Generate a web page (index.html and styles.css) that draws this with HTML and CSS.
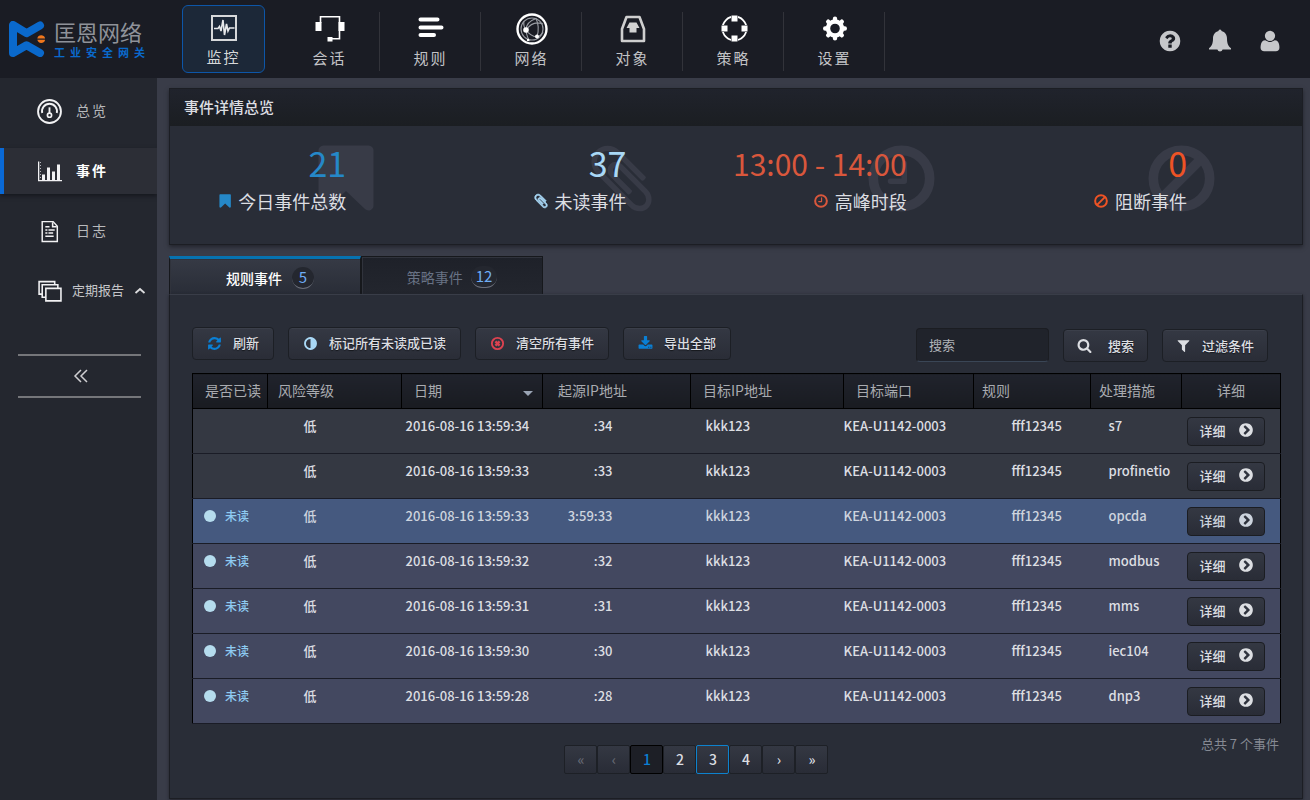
FILE: index.html
```html
<!DOCTYPE html>
<html lang="zh-CN">
<head>
<meta charset="utf-8">
<title>匡恩网络 工业安全网关</title>
<link rel="stylesheet" href="styles.css">
</head>
<body>
<svg class="defs" aria-hidden="true">
  <symbol id="i-refresh" viewBox="0 0 1792 1792"><path d="M1639 1056q0 5-1 7-64 268-268 434.500t-478 166.500q-146 0-282.500-55t-243.500-157l-129 129q-19 19-45 19t-45-19-19-45v-448q0-26 19-45t45-19h448q26 0 45 19t19 45-19 45l-137 137q71 66 161 102t187 36q134 0 250-65t186-179q11-17 53-117 8-23 30-23h192q13 0 22.500 9.500t9.500 22.500zm25-800v448q0 26-19 45t-45 19h-448q-26 0-45-19t-19-45 19-45l138-138q-148-137-349-137-134 0-250 65t-186 179q-11 17-53 117-8 23-30 23h-199q-13 0-22.500-9.500t-9.500-22.500v-7q65-268 270-434.500t480-166.500q146 0 284 55.500t245 156.500l130-129q19-19 45-19t45 19 19 45z"/></symbol>
  <symbol id="i-adjust" viewBox="0 0 1792 1792"><path d="M896 1440v-1088q-148 0-273 73t-198 198-73 273 73 273 198 198 273 73zm768-544q0 209-103 385.500t-279.500 279.500-385.500 103-385.500-103-279.500-279.500-103-385.500 103-385.500 279.500-279.500 385.500-103 385.500 103 279.500 279.500 103 385.500z"/></symbol>
  <symbol id="i-clear" viewBox="0 0 16 16"><circle cx="8" cy="8" r="6" fill="none" stroke="currentColor" stroke-width="2"/><path d="M5.800 5.800l4.400 4.400M10.200 5.800l-4.400 4.400" stroke="currentColor" stroke-width="2.600"/></symbol>
  <symbol id="i-download" viewBox="0 0 1792 1792"><path d="M1344 1344q0-26-19-45t-45-19-45 19-19 45 19 45 45 19 45-19 19-45zm256 0q0-26-19-45t-45-19-45 19-19 45 19 45 45 19 45-19 19-45zm128-224v320q0 40-28 68t-68 28h-1472q-40 0-68-28t-28-68v-320q0-40 28-68t68-28h465l135 136q58 56 136 56t136-56l136-136h464q40 0 68 28t28 68zm-325-569q17 41-14 70l-448 448q-18 19-45 19t-45-19l-448-448q-31-29-14-70 17-39 59-39h256v-448q0-26 19-45t45-19h256q26 0 45 19t19 45v448h256q42 0 59 39z"/></symbol>
  <symbol id="i-search" viewBox="0 0 1792 1792"><path d="M1216 832q0-185-131.500-316.500t-316.500-131.500-316.500 131.500-131.500 316.500 131.500 316.500 316.500 131.500 316.500-131.500 131.500-316.500zm512 832q0 52-38 90t-90 38q-54 0-90-38l-343-342q-179 124-399 124-143 0-273.500-55.500t-225-150-150-225-55.500-273.500 55.500-273.500 150-225 225-150 273.500-55.500 273.500 55.500 225 150 150 225 55.500 273.500q0 220-124 399l343 343q37 37 37 90z"/></symbol>
  <symbol id="i-filter" viewBox="0 0 1792 1792"><path d="M1595 295q17 41-14 70l-493 493v742q0 42-39 59-13 5-25 5-27 0-45-19l-256-256q-19-19-19-45v-486l-493-493q-31-29-14-70 17-39 59-39h1280q42 0 59 39z"/></symbol>
  <symbol id="i-bookmark" viewBox="-128 0 1792 1792"><path d="M1420 128q23 0 44 9 33 13 52.500 41t19.500 62v1289q0 34-19.500 62t-52.500 41q-19 8-44 8-48 0-83-32l-441-424-441 424q-36 33-83 33-23 0-44-9-33-13-52.500-41t-19.500-62v-1289q0-34 19.500-62t52.500-41q21-9 44-9h1048z"/></symbol>
  <symbol id="i-clip" viewBox="0 0 1792 1792"><path d="M1596 1385q0 117-79 196t-196 79q-135 0-235-100l-777-776q-113-115-113-271 0-159 110-270t269-111q158 0 273 113l605 606q10 10 10 22 0 16-30.500 46.500t-46.500 30.500q-13 0-23-10l-606-607q-79-77-181-77-106 0-179 75t-73 181q0 105 76 181l776 777q63 63 145 63 64 0 106-42t42-106q0-82-63-145l-581-581q-26-24-60-24-29 0-48 19t-19 48q0 32 25 59l410 410q10 10 10 22 0 16-31 47t-47 31q-12 0-22-10l-410-410q-63-61-63-149 0-82 57-139t139-57q88 0 149 63l581 581q100 98 100 235z"/></symbol>
  <symbol id="i-clock" viewBox="0 0 1792 1792"><circle cx="896" cy="896" r="656" fill="none" stroke="currentColor" stroke-width="224"/><path d="M960 544v416h-320" fill="none" stroke="currentColor" stroke-width="128" stroke-linejoin="round" stroke-linecap="round"/></symbol>
  <symbol id="i-ban" viewBox="0 0 1792 1792"><circle cx="896" cy="896" r="656" fill="none" stroke="currentColor" stroke-width="224"/><path d="M432 1360l928-928" stroke="currentColor" stroke-width="224"/></symbol>
  <symbol id="i-go" viewBox="0 0 1792 1792"><path d="M845 1395l454-454q19-19 19-45t-19-45l-454-454q-19-19-45-19t-45 19l-102 102q-19 19-19 45t19 45l307 307-307 307q-19 19-19 45t19 45l102 102q19 19 45 19t45-19zm819-499q0 209-103 385.500t-279.500 279.500-385.500 103-385.500-103-279.500-279.500-103-385.500 103-385.500 279.500-279.500 385.500-103 385.500 103 279.500 279.500 103 385.500z"/></symbol>
</svg>

<header class="topbar">
  <a class="logo" href="#">
    <svg class="logo-mark" viewBox="0 0 36 36" aria-hidden="true">
      <path d="M31 4.500L17.500 12.200L4 4V32L17.500 24.300L31 32" fill="none" stroke="#0a69cc" stroke-width="8" stroke-linejoin="round" stroke-linecap="round"/>
      <path d="M28.300 17.400a4 4 0 0 1 7.800 0zM28.300 18.800a4 4 0 0 0 7.800 0z" fill="#f0771c"/>
    </svg>
    <span class="logo-text"><span class="logo-name">匡恩网络</span><span class="logo-sub">工业安全网关</span></span>
  </a>
  <nav class="nav">
    <a class="nav-item active" href="#">
      <svg viewBox="0 0 32 32"><rect x="4" y="4" width="24" height="24" fill="none" stroke="#d6d8da" stroke-width="2"/><path d="M6 16.500h4l1.500-2 1.500 4.500 2-11 1.500 15 2-11 1.500 7 1.500-3h5" fill="none" stroke="#e6e8ea" stroke-width="1.600"/></svg>
      <span>监控</span></a>
    <a class="nav-item" href="#">
      <svg viewBox="0 0 32 32"><path d="M6.500 10V3.800h19v22H17" fill="none" stroke="#fff" stroke-width="1.600"/><path d="M1.500 9h6v9h-6zM24.500 9h6v9h-6zM13.500 24h5v4.500h-5z" fill="#fff"/></svg>
      <span>会话</span></a>
    <a class="nav-item" href="#">
      <svg viewBox="0 0 32 32"><path d="M5.500 6.500h17M5.500 14.500h21M5.500 22h13.500" stroke="#fff" stroke-width="4" stroke-linecap="round"/></svg>
      <span>规则</span></a>
    <a class="nav-item" href="#">
      <svg viewBox="0 0 32 32"><circle cx="16" cy="16" r="14.500" fill="none" stroke="#fff" stroke-width="2.400"/><g fill="none" stroke="#9a9da4" stroke-width="1.100"><circle cx="16" cy="16" r="11"/><path d="M10 17Q10 9 20 5.500M10 17Q17 7 27 11M10 17Q14 23 21 24M21 24Q24 14 20 5.500M10 17q1 8 4 11M8 8q-1 5 2 9M21 24q4-1 6-5"/></g><circle cx="10" cy="17" r="2.800" fill="#fff"/><circle cx="21" cy="23.500" r="2" fill="#fff"/><circle cx="12" cy="27" r="1.200" fill="#fff"/></svg>
      <span>网络</span></a>
    <a class="nav-item" href="#">
      <svg viewBox="0 0 32 32"><path d="M9.500 4h13l4.500 12v12H5V16z" fill="none" stroke="#cfcfcf" stroke-width="2.600" stroke-linejoin="round"/><path d="M12.500 9.500h7l3 5.500h-3v4.500h-7V15h-3z" fill="#d2d2d2"/></svg>
      <span>对象</span></a>
    <a class="nav-item" href="#">
      <svg viewBox="0 0 32 32"><circle cx="16.500" cy="15.500" r="12" fill="none" stroke="#fff" stroke-width="1.800"/><path d="M13 2h7v7h-7zM13 22h7v7h-7zM3 12h7v7H3zM23 12h7v7h-7z" fill="#1a1c24"/><path d="M13.500 2.500h6v6h-6zM13.500 22.500h6v6h-6zM3.500 12.500h6v6h-6zM23.500 12.500h6v6h-6z" fill="#fff"/></svg>
      <span>策略</span></a>
    <a class="nav-item" href="#">
      <svg viewBox="0 0 32 32"><circle cx="16" cy="15.500" r="7" fill="none" stroke="#fff" stroke-width="4.400"/><g stroke="#fff" stroke-width="4.400" stroke-linecap="round"><path d="M16 5.700V8M16 23v2.300M6.200 15.500H8M24 15.500h1.800M9.200 8.700l1.300 1.300M21.500 21l1.300 1.300M22.800 8.700L21.500 10M10.500 21l-1.300 1.300"/></g></svg>
      <span>设置</span></a>
  </nav>
  <div class="tools">
    <button type="button" aria-label="帮助"><svg viewBox="0 0 1792 1792"><path d="M1024 1376v-192q0-14-9-23t-23-9h-192q-14 0-23 9t-9 23v192q0 14 9 23t23 9h192q14 0 23-9t9-23zm256-672q0-88-55.500-163t-138.500-116-170-41q-243 0-371 213-15 24 8 42l132 100q7 6 19 6 16 0 25-12 53-68 86-92 34-24 86-24 48 0 85.500 26t37.500 59q0 38-20 61t-68 45q-63 28-115.500 86.500t-52.500 125.500v36q0 14 9 23t23 9h192q14 0 23-9t9-23q0-19 21.500-49.500t54.500-49.500q32-18 49-28.500t46-35 44.500-48 28-60.500 12.500-81zm384 192q0 209-103 385.500t-279.500 279.500-385.500 103-385.500-103-279.500-279.500-103-385.500 103-385.500 279.500-279.500 385.500-103 385.500 103 279.500 279.500 103 385.500z"/></svg></button>
    <button type="button" aria-label="通知"><svg viewBox="0 0 24 24"><path d="M12 .500a1.500 1.500 0 0 1 1.500 1.600C17 3 19 6 19 9.500c0 5.500 1.500 8 4 9.800V20.500h-8.400a2.700 2.700 0 0 1-5.200 0H1v-1.200c2.500-1.800 4-4.300 4-9.800C5 6 7 3 10.500 2.100A1.500 1.500 0 0 1 12 .500z"/></svg></button>
    <button type="button" aria-label="用户"><svg viewBox="0 0 1792 1792"><path d="M1600 1405q0 120-73 189.500t-194 69.500h-874q-121 0-194-69.500t-73-189.500q0-53 3.500-103.500t14-109 26.500-108.500 43-97.500 62-81 85.500-53.500 111.500-20q9 0 42 21.500t74.500 48 108 48 133.500 21.500 133.500-21.500 108-48 74.500-48 42-21.500q61 0 111.500 20t85.500 53.500 62 81 43 97.500 26.500 108.500 14 109 3.500 103.500zm-320-893q0 159-112.500 271.500t-271.500 112.500-271.500-112.500-112.500-271.500 112.500-271.500 271.500-112.500 271.500 112.500 112.500 271.500z"/></svg></button>
  </div>
</header>

<div class="layout">
  <aside class="sidebar">
    <nav class="menu">
      <a class="menu-item" href="#"><svg viewBox="0 0 24 24"><g fill="none" stroke="#f2f2f4"><circle cx="12" cy="12" r="11" stroke-width="1.800"/><path d="M5 13.500A7.200 7.200 0 1 1 19 13.500" stroke-width="1.800"/><circle cx="12" cy="15.500" r="2" stroke-width="1.600"/><path d="M12 8v6" stroke-width="1.800"/></g></svg><span>总览</span></a>
      <a class="menu-item active" href="#"><svg viewBox="0 0 25 25"><path d="M1 2.500h1.300V21H25v1.300H1zM5 15.500h3V21H5zM10 8.500h3V21h-3zM15 12.500h3V21h-3zM20 5.500h3V21h-3z" fill="#f2f2f4"/><path d="M3 3.500h1M3 6.500h1M3 9.500h1M3 12.500h1M3 15.500h1M3 18.500h1" stroke="#b4b5ba" stroke-width="1"/></svg><span>事件</span></a>
      <a class="menu-item" href="#"><svg viewBox="0 0 24 24"><path d="M5 2.500h10.500l4 4.500v14.500H5z" fill="none" stroke="#f2f2f4" stroke-width="1.400"/><path d="M15 3v4.500h4M8 7.500h4M8 10.500h2M11 10.500h6M8 13.500h2M11 13.500h4.500M8 16.500h8" fill="none" stroke="#f2f2f4" stroke-width="1.500"/></svg><span>日志</span></a>
      <a class="menu-item wide" href="#" aria-expanded="true"><svg viewBox="0 0 24 24"><g fill="#24272f" stroke="#f2f2f4" stroke-width="1.500"><path d="M2 2.500h15v12H2z"/><path d="M5 5.500h15v12H5z"/><path d="M8.500 9h14.500v12H8.500z"/></g></svg><span>定期报告</span><svg class="caret" viewBox="0 0 12 8"><path d="M1.500 6L6 2l4.500 4" fill="none" stroke="#dcdcde" stroke-width="1.800"/></svg></a>
    </nav>
    <button type="button" class="collapse" aria-label="收起菜单"><svg viewBox="0 0 16 14"><path d="M9 1L3 7l6 6M15 1L9 7l6 6" fill="none" stroke="#cfcfd2" stroke-width="1.500"/></svg></button>
  </aside>

  <main class="main">
    <section class="overview">
      <h2>事件详情总览</h2>
      <div class="stats">
        <div class="stat blue"><svg class="stat-bg"><use href="#i-bookmark"/></svg><strong>21</strong><p><svg><use href="#i-bookmark"/></svg>今日事件总数</p></div>
        <div class="stat sky"><svg class="stat-bg"><use href="#i-clip"/></svg><strong>37</strong><p><svg class="bold"><use href="#i-clip"/></svg>未读事件</p></div>
        <div class="stat red"><svg class="stat-bg"><use href="#i-clock"/></svg><strong>13:00 - 14:00</strong><p><svg><use href="#i-clock"/></svg>高峰时段</p></div>
        <div class="stat orange"><svg class="stat-bg"><use href="#i-ban"/></svg><strong>0</strong><p><svg><use href="#i-ban"/></svg>阻断事件</p></div>
      </div>
    </section>

    <div class="tabs">
      <button type="button" class="tab active">规则事件<span class="count">5</span></button>
      <button type="button" class="tab">策略事件<span class="count">12</span></button>
    </div>

    <section class="panel">
      <div class="toolbar">
        <button type="button" class="btn"><svg class="c-blue"><use href="#i-refresh"/></svg>刷新</button>
        <button type="button" class="btn"><svg class="c-sky"><use href="#i-adjust"/></svg>标记所有未读成已读</button>
        <button type="button" class="btn"><svg class="c-red"><use href="#i-clear"/></svg>清空所有事件</button>
        <button type="button" class="btn"><svg class="c-blue"><use href="#i-download"/></svg>导出全部</button>
        <form class="search">
          <input type="text" placeholder="搜索" aria-label="搜索">
          <button type="button" class="btn roomy"><svg><use href="#i-search"/></svg>搜索</button>
          <button type="button" class="btn"><svg><use href="#i-filter"/></svg>过滤条件</button>
        </form>
      </div>

      <table class="events">
        <colgroup><col class="w-read"><col class="w-risk"><col class="w-date"><col class="w-src"><col class="w-dst"><col class="w-port"><col class="w-rule"><col class="w-act"><col class="w-more"></colgroup>
        <thead><tr><th class="read">是否已读</th><th>风险等级</th><th class="date">日期</th><th class="src">起源IP地址</th><th class="dst">目标IP地址</th><th class="dst">目标端口</th><th class="tight">规则</th><th class="tight">处理措施</th><th class="more">详细</th></tr></thead>
        <tbody>
          <tr><td class="read"></td><td class="risk">低</td><td>2016-08-16 13:59:34</td><td class="src">:34</td><td class="dst">kkk123</td><td>KEA-U1142-0003</td><td class="rule">fff12345</td><td class="act">s7</td><td class="more"><button type="button" class="detail">详细<svg><use href="#i-go"/></svg></button></td></tr>
          <tr><td class="read"></td><td class="risk">低</td><td>2016-08-16 13:59:33</td><td class="src">:33</td><td class="dst">kkk123</td><td>KEA-U1142-0003</td><td class="rule">fff12345</td><td class="act">profinetio</td><td class="more"><button type="button" class="detail">详细<svg><use href="#i-go"/></svg></button></td></tr>
          <tr class="unread selected"><td class="read"><span class="flag">未读</span></td><td class="risk">低</td><td>2016-08-16 13:59:33</td><td class="src">3:59:33</td><td class="dst">kkk123</td><td>KEA-U1142-0003</td><td class="rule">fff12345</td><td class="act">opcda</td><td class="more"><button type="button" class="detail">详细<svg><use href="#i-go"/></svg></button></td></tr>
          <tr class="unread"><td class="read"><span class="flag">未读</span></td><td class="risk">低</td><td>2016-08-16 13:59:32</td><td class="src">:32</td><td class="dst">kkk123</td><td>KEA-U1142-0003</td><td class="rule">fff12345</td><td class="act">modbus</td><td class="more"><button type="button" class="detail">详细<svg><use href="#i-go"/></svg></button></td></tr>
          <tr class="unread"><td class="read"><span class="flag">未读</span></td><td class="risk">低</td><td>2016-08-16 13:59:31</td><td class="src">:31</td><td class="dst">kkk123</td><td>KEA-U1142-0003</td><td class="rule">fff12345</td><td class="act">mms</td><td class="more"><button type="button" class="detail">详细<svg><use href="#i-go"/></svg></button></td></tr>
          <tr class="unread"><td class="read"><span class="flag">未读</span></td><td class="risk">低</td><td>2016-08-16 13:59:30</td><td class="src">:30</td><td class="dst">kkk123</td><td>KEA-U1142-0003</td><td class="rule">fff12345</td><td class="act">iec104</td><td class="more"><button type="button" class="detail">详细<svg><use href="#i-go"/></svg></button></td></tr>
          <tr class="unread"><td class="read"><span class="flag">未读</span></td><td class="risk">低</td><td>2016-08-16 13:59:28</td><td class="src">:28</td><td class="dst">kkk123</td><td>KEA-U1142-0003</td><td class="rule">fff12345</td><td class="act">dnp3</td><td class="more"><button type="button" class="detail">详细<svg><use href="#i-go"/></svg></button></td></tr>
        </tbody>
      </table>

      <div class="footer">
        <nav class="pager" aria-label="分页">
          <button type="button" disabled>«</button><button type="button" disabled>‹</button><button type="button" class="current">1</button><button type="button">2</button><button type="button" class="hover">3</button><button type="button">4</button><button type="button">›</button><button type="button">»</button>
        </nav>
        <p class="total">总共 7 个事件</p>
      </div>
    </section>
  </main>
</div>
</body>
</html>
```
FILE: styles.css
```css
* { box-sizing: border-box; }

body {
  margin: 0;
  min-height: 100vh;
  display: flex;
  flex-direction: column;
  background: #393c48;
  color: #dcdee2;
  font: 500 13px/20px "Noto Sans CJK SC", "Noto Sans", sans-serif;
}

a { color: inherit; text-decoration: none; }
button, input { font: inherit; color: inherit; }
button { cursor: pointer; }
h2, p { margin: 0; }
svg { fill: currentColor; flex: none; }
.defs { position: absolute; width: 0; height: 0; }

/* Top bar */
.topbar {
  display: flex;
  align-items: flex-start;
  height: 78px;
  background: #1a1c24;
}
.logo { display: flex; align-items: center; width: 182px; height: 78px; padding-left: 9px; gap: 9px; }
.logo-mark { width: 36px; height: 36px; }
.logo-text { display: flex; flex-direction: column; }
.logo-name { font-size: 22px; line-height: 26px; font-weight: 400; color: #8f9299; white-space: nowrap; }
.logo-sub { font-size: 11px; line-height: 16px; font-weight: 700; color: #0a69cc; letter-spacing: 5px; white-space: nowrap; }

.nav { display: flex; padding-top: 5px; }
.nav-item {
  position: relative;
  display: flex;
  flex-direction: column;
  align-items: center;
  width: 101px;
  height: 68px;
  padding-top: 8px;
  gap: 1px;
  font-size: 15px;
  line-height: 24px;
  font-weight: 400;
  letter-spacing: 2px;
  color: #c2c3c6;
}
.nav-item svg { width: 32px; height: 32px; }
.nav-item:not(.active)::after {
  content: "";
  position: absolute;
  right: 0;
  top: 7px;
  bottom: 2px;
  width: 1px;
  background: #32333a;
}
.nav-item.active {
  width: 83px;
  margin-right: 14px;
  padding-top: 6px;
  border: 1px solid #0d56a8;
  border-radius: 6px;
  background: #1c2838;
  color: #d6d8da;
}
.tools { display: flex; gap: 26px; margin-left: auto; padding: 29px 28px 0 0; color: #c6c7ca; }
.tools button { display: block; padding: 0; border: 0; background: none; }
.tools svg { display: block; width: 24px; height: 24px; }

/* Side menu */
.layout { display: flex; flex: 1; }
.sidebar { flex: none; width: 157px; background: #24272f; }
.menu { display: flex; flex-direction: column; gap: 14px; padding-top: 10px; overflow: hidden; }
.menu-item {
  display: flex;
  align-items: center;
  height: 46px;
  padding-left: 37px;
  gap: 14px;
  font-size: 14px;
  font-weight: 400;
  letter-spacing: 2px;
  color: #b8b9bc;
}
.menu-item span { padding-bottom: 2px; }
.menu-item svg { width: 25px; height: 25px; }
.menu-item.active {
  padding-left: 33px;
  border-left: 4px solid #0a69d6;
  background: #2c2e36;
  box-shadow: 0 2px 4px #16181e;
  color: #fff;
  font-weight: 700;
}
.menu-item.wide { gap: 10px; font-size: 13px; letter-spacing: 0; color: #c4c5c8; white-space: nowrap; }
.menu-item svg.caret { width: 12px; height: 8px; }
.collapse {
  display: flex;
  align-items: center;
  justify-content: center;
  width: 123px;
  height: 44px;
  margin: 40px 16px 0 18px;
  padding: 0;
  border: solid #75767a;
  border-width: 2px 0;
  background: none;
}
.collapse svg { width: 16px; height: 14px; }

/* Overview */
.main { flex: 1; min-width: 0; display: flex; flex-direction: column; padding: 10px 7px 1px 12px; }
.overview {
  border: 1px solid #1c1e24;
  background: #292d37;
  box-shadow: 0 2px 4px #22242c;
}
.overview h2 {
  padding: 0 14px 2px;
  background: linear-gradient(#20232c, #1b1e22);
  font-size: 15px;
  line-height: 35px;
  font-weight: 500;
}
.stats { display: grid; grid-template-columns: repeat(4, 1fr); padding-right: 11px; }
.stat {
  position: relative;
  isolation: isolate;
  padding: 17px 104px 30px 0;
  text-align: right;
  white-space: nowrap;
}
.stat strong { display: block; font-size: 34px; line-height: 40px; font-weight: 400; }
.stat p { display: flex; align-items: center; justify-content: flex-end; gap: 6px; padding-top: 5px; font-size: 18px; line-height: 26px; font-weight: 400; }
.stat p svg { width: 16px; height: 16px; }
.stat p svg.bold { stroke: currentColor; stroke-width: 90px; }
.stat-bg { position: absolute; z-index: -1; top: 14px; right: 71px; width: 77px; height: 77px; color: #383b47; }
.blue strong, .blue p svg { color: #2588c8; }
.sky strong, .sky p svg { color: #a9d8f6; }
.red strong, .red p svg { color: #d9573c; }
.red strong { font-size: 30px; }
.orange strong, .orange p svg { color: #ee5325; }

/* Tabs */
.tabs { display: flex; align-items: flex-start; margin-top: 11px; }
.tab {
  display: flex;
  align-items: center;
  justify-content: center;
  gap: 8px;
  width: 182px;
  height: 38px;
  padding: 2px 0 0;
  border: 1px solid #16181c;
  border-bottom: 0;
  background: linear-gradient(#1e2129, #23262e);
  box-shadow: inset 1px 1px 0 #30333c;
  font-size: 14px;
  font-weight: 400;
  color: #687284;
}
.tab.active {
  gap: 10px;
  width: 192px;
  padding: 2px 0 0 10px;
  border-top: 3px solid #0672b0;
  background: linear-gradient(#363a45, #292d37);
  color: #fff;
  font-weight: 500;
}
.count {
  min-width: 22px;
  padding: 0 5px 2px;
  border-bottom: 1px solid #6a6e79;
  border-radius: 11px;
  background: #24272f;
  font-size: 15px;
  line-height: 19px;
  font-weight: 400;
  color: #6fadf5;
}

/* Event list */
.panel {
  flex: 1;
  padding: 32px 23px 24px 22px;
  border: 1px solid #1c1e24;
  border-top-color: #393d48;
  background: #292d37;
  box-shadow: 0 1px 3px #22242c;
}
.toolbar { display: flex; align-items: flex-start; flex-wrap: wrap; gap: 14px; margin-bottom: 11px; }
.btn {
  display: flex;
  align-items: center;
  height: 33px;
  padding: 0 14px 1px;
  gap: 12px;
  border: 1px solid #1c1f25;
  border-radius: 4px;
  background: linear-gradient(#343843, #2a2d37);
  box-shadow: inset 0 1px 0 #3b3f4a;
  white-space: nowrap;
  text-shadow: 0 1px 1px #14161a;
}
.btn svg { width: 15px; height: 15px; margin-right: -1px; }
.btn.roomy { gap: 17px; }
.c-blue { color: #0a7fd4; }
.c-sky { color: #a9d8f6; }
.c-red { color: #dc4250; }
.search { display: flex; align-items: flex-end; gap: 14px; margin-left: auto; padding: 1px 11px 0 0; }
.search .btn { padding: 0 13px; }
.search input {
  width: 133px;
  height: 34px;
  padding: 0 12px 2px;
  border: 1px solid #1b1d22;
  border-bottom-color: #3a4656;
  border-radius: 4px;
  background: #20232b;
}
.search input::placeholder { color: #b0b3b8; opacity: 1; font-weight: 400; }

.events { width: 100%; table-layout: fixed; border-collapse: collapse; border: 1px solid #000; }
.w-read { width: 75px; }
.w-risk { width: 134px; }
.w-date { width: 141px; }
.w-src { width: 148px; }
.w-dst { width: 153px; }
.w-port { width: 130px; }
.w-rule { width: 117px; }
.w-act { width: 91px; }
.w-more { width: 99px; }
.events th {
  height: 35px;
  padding: 0 0 3px 10px;
  border: 1px solid #000;
  background: linear-gradient(#20232c, #191b21);
  font-size: 14px;
  font-weight: 400;
  text-align: left;
  white-space: nowrap;
  color: #a9abb0;
}
.events th.read, .events th.date, .events th.dst { padding-left: 12px; }
.events th.src { padding: 0 0 3px 15px; text-align: left; }
.events th.tight { padding-left: 8px; }
.events th.more { padding-left: 0; text-align: center; }
.events th.date::after {
  content: "";
  float: right;
  margin: 11px 9px 0 0;
  border: 5px solid transparent;
  border-top-color: #9aa4b4;
  border-bottom: 0;
}
.events td {
  height: 45px;
  padding: 7px 0 0;
  border-bottom: 1px solid #1a1c26;
  background: #343842;
  vertical-align: top;
  white-space: nowrap;
}
.events td.read { padding-left: 11px; }
.events td.risk { padding-left: 36px; }
.events td:nth-child(3) { padding-left: 4px; }
.events td.src { padding-right: 78px; text-align: right; }
.events td.dst { padding-left: 15px; }
.events td.rule { padding-left: 38px; }
.events td.act { padding-left: 18px; }
.events td.more { padding: 8px 0 0 5px; }
.events .unread td { background: #434860; }
.events .selected td { background: #45597f; color: #cdd4de; }
.flag { display: flex; align-items: center; gap: 9px; font-size: 12px; color: #8ecbf2; }
.flag::before { content: ""; width: 12px; height: 12px; border-radius: 50%; background: #b5dcee; }
.detail {
  display: flex;
  align-items: center;
  gap: 12px;
  height: 29px;
  padding: 0 10px 2px 12px;
  border: 1px solid #1b1d22;
  border-radius: 4px;
  background: linear-gradient(#343843, #292c36);
}
.detail svg { width: 16px; height: 16px; margin-bottom: 2px; }

/* Pager */
.footer { display: flex; align-items: flex-start; padding-top: 10px; }
.pager { flex: 1; display: flex; justify-content: center; padding-top: 11px; }
.pager button {
  width: 33px;
  height: 29px;
  padding: 0 0 1px;
  border: 1px solid #1d2026;
  border-radius: 2px;
  background: linear-gradient(#343843, #292c36);
  font-size: 14px;
}
.pager button:disabled { color: #666a74; }
.pager .current { border-color: #000; background: #1d1f26; color: #0a7fd4; }
.pager .hover { border-color: #0d82ce; }
.total { font-weight: 400; color: #868a93; }
```
